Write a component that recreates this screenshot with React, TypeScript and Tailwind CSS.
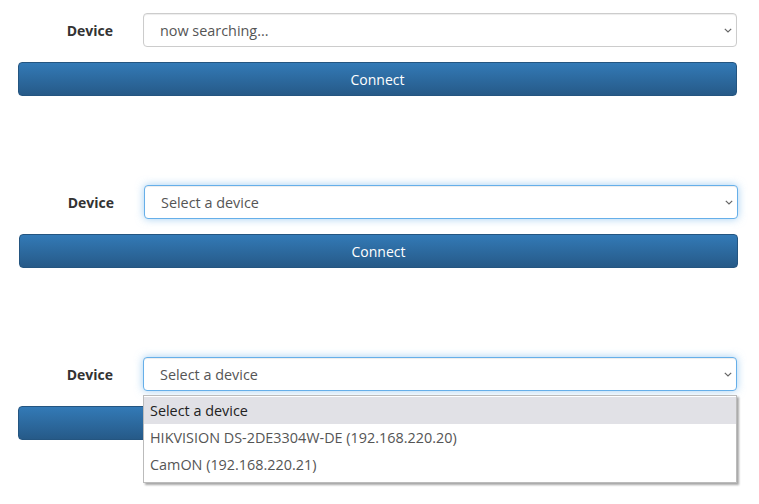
const font = { fontFamily: '"Open Sans", "Noto Sans CJK JP", sans-serif' };

function Chevron() {
  return (
    <svg width="8" height="5" viewBox="0 0 8 5" className="shrink-0">
      <path d="M0.8 0.8l3.2 3.2 3.2-3.2" fill="none" stroke="#666" strokeWidth="1.2" />
    </svg>
  );
}

interface DeviceFormProps {
  value: string;
  focused?: boolean;
  open?: boolean;
  className?: string;
}

const options = [
  'Select a device',
  'HIKVISION DS-2DE3304W-DE (192.168.220.20)',
  'CamON (192.168.220.21)',
];

function DeviceForm({ value, focused = false, open = false, className = '' }: DeviceFormProps) {
  return (
    <div className={'flex flex-col gap-[15px] ' + className}>
      <div className="flex items-center">
        <label className="w-[125px] pr-[30px] text-right text-[14px] font-bold text-[#333]">Device</label>
        <div className="relative flex-1">
          <div
            className={
              'h-[34px] rounded-[4px] border bg-white pl-[16px] pr-[4px] flex items-center justify-between text-[14.4px] text-[#555] ' +
              (focused
                ? 'border-[#66afe9] shadow-[inset_0_1px_1px_rgba(0,0,0,0.075),0_0_8px_rgba(102,175,233,0.6)]'
                : 'border-[#ccc] shadow-[inset_0_1px_1px_rgba(0,0,0,0.075)]')
            }
          >
            <span className="pt-[2px]">{value}</span>
            <Chevron />
          </div>
          {open && (
            <div className="absolute left-0 right-0 top-[38px] z-10 flex flex-col border border-[#bbb] bg-white pt-[1px] pb-[4px] shadow-[2px_2px_2px_rgba(0,0,0,0.35)]">
              {options.map((opt, i) => (
                <div
                  key={i}
                  className={
                    'h-[27px] flex items-center pl-[6px] text-[14.4px] ' +
                    (i === 0 ? 'bg-[#e1e1e6] text-[#222]' : 'text-[#555]')
                  }
                >
                  {opt}
                </div>
              ))}
            </div>
          )}
        </div>
      </div>
      <button
        type="button"
        className="h-[34px] w-full rounded-[4px] border border-[#245580] bg-gradient-to-b from-[#337ab7] to-[#265a88] text-[14px] text-white"
      >
        Connect
      </button>
    </div>
  );
}

export default function App() {
  return (
    <div className="flex min-h-[504px] w-[759px] flex-col gap-[89px] bg-white pt-[13px] pl-[18px] pr-[22px]" style={font}>
      <DeviceForm value="now searching..." />
      <DeviceForm value="Select a device" focused className="ml-px -mr-px" />
      <DeviceForm value="Select a device" focused open />
    </div>
  );
}
